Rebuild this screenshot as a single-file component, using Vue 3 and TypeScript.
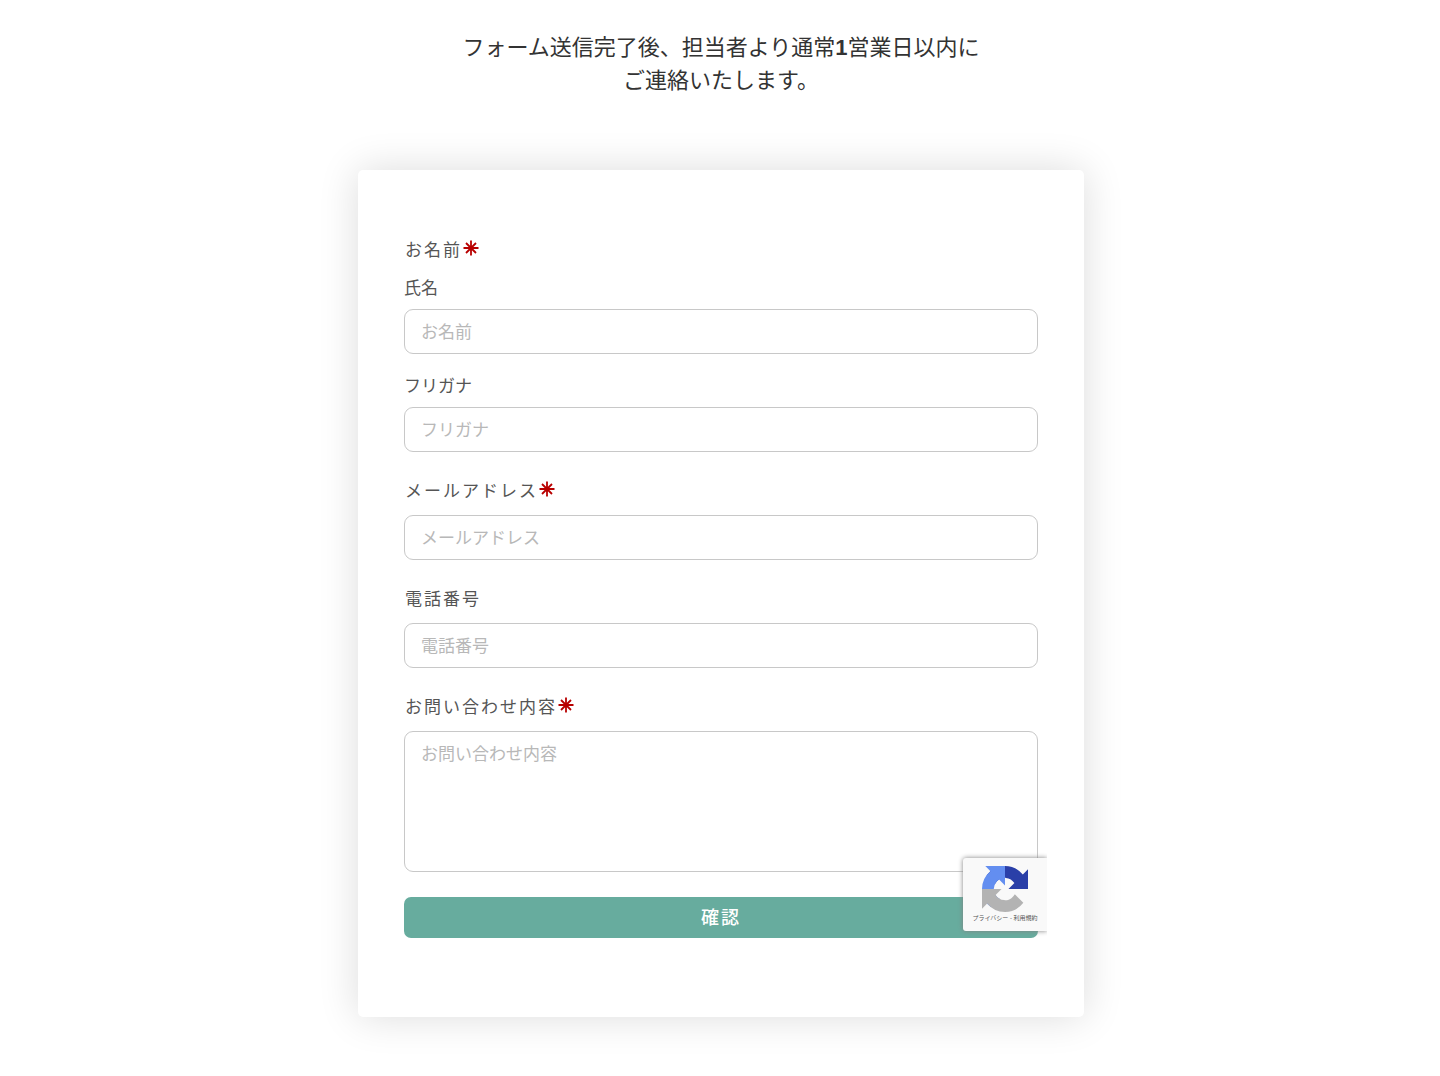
<script setup lang="ts">
import { reactive } from 'vue'

interface Line {
  id: string
  caption?: string
  placeholder: string
  type: 'text' | 'email' | 'tel' | 'area'
}

interface Section {
  title: string
  required: boolean
  lines: Line[]
}

const sections: Section[] = [
  {
    title: 'お名前',
    required: true,
    lines: [
      { id: 'name', caption: '氏名', placeholder: 'お名前', type: 'text' },
      { id: 'kana', caption: 'フリガナ', placeholder: 'フリガナ', type: 'text' },
    ],
  },
  {
    title: 'メールアドレス',
    required: true,
    lines: [{ id: 'email', placeholder: 'メールアドレス', type: 'email' }],
  },
  {
    title: '電話番号',
    required: false,
    lines: [{ id: 'tel', placeholder: '電話番号', type: 'tel' }],
  },
  {
    title: 'お問い合わせ内容',
    required: true,
    lines: [{ id: 'message', placeholder: 'お問い合わせ内容', type: 'area' }],
  },
]

const values = reactive<Record<string, string>>({
  name: '',
  kana: '',
  email: '',
  tel: '',
  message: '',
})
</script>

<template>
  <main class="page">
    <p class="lead">フォーム送信完了後、担当者より通常<strong>1</strong>営業日以内に<br />ご連絡いたします。</p>

    <form class="card" @submit.prevent>
      <div v-for="section in sections" :key="section.title" class="section">
        <component
          :is="section.lines[0].caption ? 'div' : 'label'"
          class="title"
          :for="section.lines[0].caption ? undefined : section.lines[0].id"
        >
          <span>{{ section.title }}</span>
          <svg v-if="section.required" class="star" viewBox="0 0 16 16" aria-hidden="true">
            <path d="M8 .5v15M.5 8h15M3 3l10 10M13 3L3 13" />
          </svg>
        </component>
        <div class="lines">
          <div v-for="line in section.lines" :key="line.id" class="line">
            <label v-if="line.caption" class="caption" :for="line.id">{{ line.caption }}</label>
            <textarea
              v-if="line.type === 'area'"
              :id="line.id"
              v-model="values[line.id]"
              class="control area"
              :placeholder="line.placeholder"
            ></textarea>
            <input
              v-else
              :id="line.id"
              v-model="values[line.id]"
              class="control"
              :type="line.type"
              :placeholder="line.placeholder"
            />
          </div>
        </div>
      </div>
      <button class="submit" type="submit">確認</button>

      <aside class="badge">
        <svg class="logo" viewBox="0 0 64 64" aria-hidden="true">
          <defs>
            <path
              id="arrow"
              d="M64 32V4.6l-7.2 7.2A32 32 0 0 0 32 0 32 32 0 0 0 6.500 12.700L18.300 24.600a15.600 15.600 0 0 1 4.800-5.300c2-1.600 4.900-2.900 9-2.900.5 0 .9.1 1.100.200 5 .4 9.300 3.200 11.900 7.200L36.800 32z"
            />
          </defs>
          <use href="#arrow" fill="#2a3fa8" />
          <use href="#arrow" fill="#638ef0" transform="rotate(-90 32 32)" />
          <use href="#arrow" fill="#b3b3b3" transform="rotate(180 32 32)" />
        </svg>
        <p class="terms"><a href="#">プライバシー</a> - <a href="#">利用規約</a></p>
      </aside>
    </form>
  </main>
</template>

<style>
body {
  background: #fff;
}
</style>

<style scoped>
.page {
  padding: 31px 23px 59px 25px;
  font-family: 'Liberation Sans', 'Noto Sans CJK JP', sans-serif;
  color: #555;
}

.lead {
  margin: 0 0 73px;
  font-size: 22px;
  line-height: 33px;
  text-align: center;
  color: #333;
}

.card {
  position: relative;
  box-sizing: border-box;
  max-width: 726px;
  margin: 0 auto;
  padding: 69px 46px 79px;
  border-radius: 5px;
  background: #fff;
  box-shadow: 0 0 40px rgba(0, 0, 0, 0.14);
}

.section {
  display: flex;
  flex-direction: column;
  gap: 11px;
  margin-bottom: 28px;
}

.section:first-child {
  gap: 14px;
}

.section:last-of-type {
  margin-bottom: 25px;
}

.title {
  display: flex;
  align-items: flex-start;
  padding-left: 1px;
  font-size: 17px;
  line-height: 24px;
  letter-spacing: 2px;
}

.star {
  width: 16px;
  height: 16px;
  margin: 1px 0 0 1px;
  fill: none;
  stroke: #b80000;
  stroke-width: 1.8;
}

.lines {
  display: flex;
  flex-direction: column;
  gap: 21px;
}

.line {
  display: flex;
  flex-direction: column;
  gap: 8px;
}

.caption {
  font-size: 17px;
  line-height: 24px;
}

.control {
  display: block;
  box-sizing: border-box;
  width: 100%;
  height: 45px;
  margin: 0;
  padding: 2px 16px 0;
  border: 1px solid #c8c8c8;
  border-radius: 9px;
  outline: 0;
  background: #fff;
  color: #555;
  font-family: inherit;
  font-size: 17px;
  line-height: 24px;
}

.control::placeholder {
  color: #b8b8b8;
  opacity: 1;
}

.area {
  height: 141px;
  padding: 11px 16px;
  resize: none;
}

.submit {
  display: block;
  width: 100%;
  height: 41px;
  padding: 2px 0 0;
  border: 0;
  border-radius: 7px;
  background: #67ac9e;
  color: #fff;
  font-family: inherit;
  font-size: 18px;
  font-weight: 500;
  line-height: 39px;
  letter-spacing: 2px;
}

.badge {
  position: absolute;
  right: 37px;
  bottom: 86px;
  display: flex;
  flex-direction: column;
  align-items: center;
  box-sizing: border-box;
  width: 84px;
  height: 73px;
  padding-top: 8px;
  border-radius: 3px 0 0 3px;
  background: #f9f9f9;
  box-shadow: 0 0 5px #808080;
  clip-path: inset(-8px 0 -8px -8px);
}

.logo {
  width: 46px;
  height: 46px;
}

.terms {
  margin: 0;
  font-size: 6px;
  line-height: 12px;
  white-space: nowrap;
}

.terms a {
  color: inherit;
  text-decoration: none;
}
</style>
